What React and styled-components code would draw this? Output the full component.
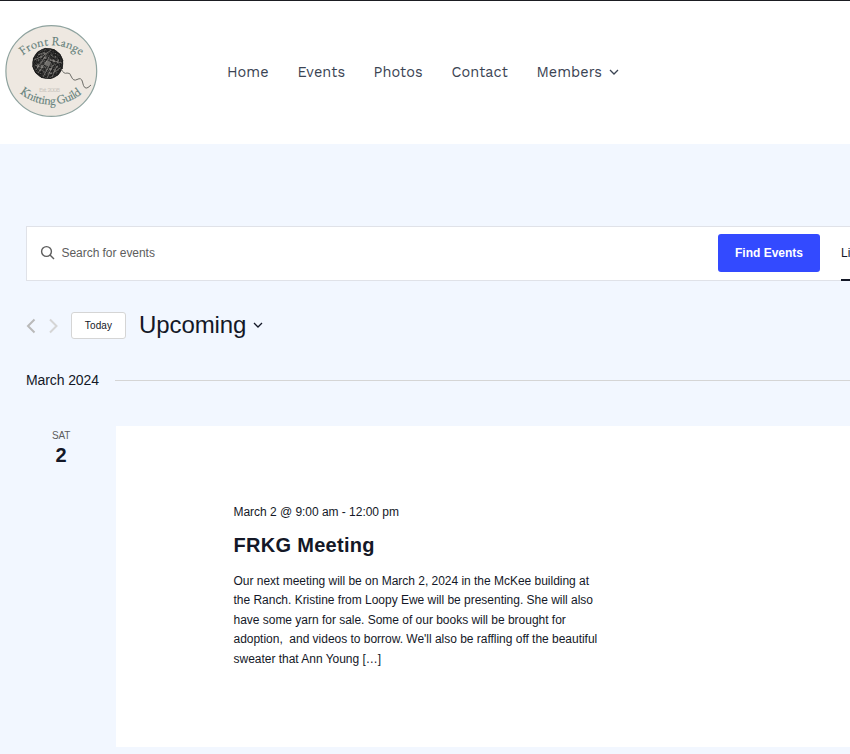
import React from "react";
import styled, { createGlobalStyle } from "styled-components";

const GlobalStyle = createGlobalStyle`
  * { box-sizing: border-box; }
  body {
    margin: 0;
    background: #f2f7ff;
    color: #141827;
    font-family: "Liberation Sans", Arial, sans-serif;
    overflow: hidden;
  }
`;

const Page = styled.div`
  width: 850px;
  height: 754px;
  overflow: hidden;
`;

const Header = styled.header`
  display: flex;
  align-items: center;
  height: 144px;
  padding: 0 0 4px 5px;
  background: #fff;
  border-top: 1px solid #1b1d22;
`;

const Logo = styled.svg`
  display: block;
  flex: none;
`;

const Nav = styled.nav`
  display: flex;
  padding: 4px 0 0 129px;
  gap: 29px;
`;

const NavItem = styled.a`
  display: flex;
  align-items: center;
  flex: none;
  width: ${(p) => p.$width}px;
  color: #3b4453;
  font: 400 14.5px/20px "Work Sans", Inter, sans-serif;
  letter-spacing: ${(p) => p.$spacing}px;
  white-space: nowrap;
`;

const Chevron = styled.svg`
  display: block;
  flex: none;
  fill: none;
  stroke: ${(p) => p.$color || "#141827"};
  stroke-width: ${(p) => p.$weight || 1.3};
  margin-left: ${(p) => p.$gap || 0}px;
`;

const Calendar = styled.main`
  padding: 82px 0 0 26px;
`;

const SearchBar = styled.div`
  display: flex;
  align-items: center;
  width: 900px;
  height: 55px;
  padding-bottom: 2px;
  background: #fff;
  border: 1px solid #e0e2e8;
`;

const SearchField = styled.label`
  display: flex;
  align-items: center;
  width: 691px;
  padding-left: 13px;
  gap: 5.5px;
  color: #5d5d5d;
  font-size: 12px;
  letter-spacing: -0.04px;
`;

const FindButton = styled.button`
  width: 102px;
  height: 38px;
  padding: 0;
  border: 0;
  border-radius: 3px;
  background: #334aff;
  color: #fff;
  font: bold 12px "Liberation Sans", Arial, sans-serif;
`;

const ViewTab = styled.div`
  align-self: flex-start;
  width: 40px;
  height: 54px;
  margin-left: 21px;
  border-bottom: 2px solid #141827;
  font-size: 12px;
  line-height: 52px;
`;

const TopBar = styled.div`
  display: flex;
  align-items: center;
  height: 27px;
  margin-top: 31px;
`;

const Arrows = styled.div`
  display: flex;
  gap: 13px;
  width: 45px;
  padding-top: 1px;
`;

const TodayButton = styled.button`
  width: 55px;
  height: 27px;
  padding: 0 0 1px;
  border: 1px solid #d5d5d5;
  border-radius: 3px;
  background: #fff;
  color: #141827;
  font: 10px "Liberation Sans", Arial, sans-serif;
  letter-spacing: 0.15px;
`;

const RangeTitle = styled.h2`
  display: flex;
  align-items: center;
  margin: 0 0 2px 13px;
  font-size: 24px;
  font-weight: 400;
  line-height: 27px;
  letter-spacing: -0.1px;
`;

const MonthRow = styled.div`
  display: flex;
  align-items: center;
  height: 20px;
  margin-top: 31px;
  font-size: 14px;
`;

const MonthName = styled.h3`
  width: 89px;
  margin: 0;
  font-size: 14px;
  font-weight: 400;
  letter-spacing: -0.1px;
`;

const Rule = styled.div`
  flex: 1;
  height: 1px;
  background: #d5d5d5;
`;

const EventRow = styled.article`
  display: flex;
  margin-top: 36px;
`;

const DateTag = styled.time`
  width: 70px;
  margin-right: 20px;
  padding-top: 4px;
  text-align: center;
`;

const Weekday = styled.div`
  color: #5d5d5d;
  font-size: 10px;
  line-height: 12px;
  letter-spacing: -0.2px;
`;

const DayNumber = styled.div`
  font-size: 20px;
  font-weight: 700;
  line-height: 26px;
`;

const EventCard = styled.div`
  flex: 1;
  height: 321px;
  padding: 76px 0 0 117.5px;
  background: #fff;
`;

const EventTime = styled.div`
  font-size: 12px;
  line-height: 20px;
  letter-spacing: -0.03px;
`;

const EventTitle = styled.h3`
  margin: 9px 0 12.9px;
  font-size: 20px;
  line-height: 28px;
  letter-spacing: 0.3px;
`;

const Description = styled.p`
  margin: 0;
  font-size: 12px;
  line-height: 19.4px;
  letter-spacing: -0.02px;
  white-space: pre;
`;

const LINKS = [
  { label: "Home", width: 41.5, spacing: 0.05 },
  { label: "Events", width: 47, spacing: 0.05 },
  { label: "Photos", width: 49, spacing: 0.05 },
  { label: "Contact", width: 56, spacing: 0.05 },
  { label: "Members", width: 90, spacing: 0.05, menu: true },
];

const SUMMARY = [
  "Our next meeting will be on March 2, 2024 in the McKee building at",
  "the Ranch. Kristine from Loopy Ewe will be presenting. She will also",
  "have some yarn for sale. Some of our books will be brought for",
  "adoption,\u00a0 and videos to borrow. We'll also be raffling off the beautiful",
  "sweater that Ann Young […]",
];

// Strands wound around the ball: nested ellipses at several angles.
const STRANDS = [-65, -38, -12, 20, 48, 80].flatMap((angle, i) =>
  [3, 7, 11].map((ry) => ({ angle, ry: ry + (i % 3) * 0.7 }))
);

function GuildLogo() {
  return (
    <Logo width="93" height="94" viewBox="5 24 93 94" role="img" aria-label="Front Range Knitting Guild">
      <defs>
        <path id="topArc" d="M22 56 A46 46 0 0 1 81 56" />
        <path id="bottomArc" d="M18 91.5 A49 49 0 0 0 84.5 91.5" />
      </defs>
      <circle cx="51.3" cy="71" r="45.4" fill="#eee8e1" stroke="#8fa39f" strokeWidth="1.2" />
      <g fill="#64807a" stroke="#64807a" strokeWidth=".15" fontFamily="'EB Garamond', 'Liberation Serif', serif" fontSize="12.5">
        <text textAnchor="middle">
          <textPath href="#topArc" startOffset="50%" textLength="62">Front Range</textPath>
        </text>
        <text textAnchor="middle">
          <textPath href="#bottomArc" startOffset="49%" textLength="67">Knitting Guild</textPath>
        </text>
      </g>
      <circle cx="47.8" cy="63.5" r="15.4" fill="#716f6c" />
      <g fill="none" stroke="#161616" strokeWidth=".6">
        {STRANDS.map((s, i) => (
          <ellipse key={i} cx="47.8" cy="63.5" rx="15.2" ry={s.ry} transform={`rotate(${s.angle} 47.8 63.5)`} />
        ))}
      </g>
      <g fill="none" stroke="#b5b0aa" strokeWidth=".5">
        <path d="M34 60Q43 57 51 50M36 70L46 55M38 73L49 58M43 77L49 66M47 78L53 65M52 77L57 66M50 60L62 63M35 65L43 68M55 72L60 68M38 55L45 52" />
      </g>
      <path
        d="M61 69 Q64 74.5 67 73 Q70 72 71.5 77 Q73.5 81.5 77 79.5 Q81.5 77 82.5 82 Q84 90 88 87.5 L91 85"
        fill="none"
        stroke="#6c6c67"
        strokeWidth="1"
      />
      <text x="39" y="91.5" fill="#cbc6c0" fontFamily="Lato, sans-serif" fontSize="6.5" textLength="21">
        Est. 2008
      </text>
    </Logo>
  );
}

export default function App() {
  return (
    <Page>
      <GlobalStyle />
      <Header>
        <GuildLogo />
        <Nav>
          {LINKS.map((link) => (
            <NavItem key={link.label} $width={link.width} $spacing={link.spacing}>
              {link.label}
              {link.menu && (
                <Chevron width="10" height="8" viewBox="0 0 10 8" $gap={7} $color="#3b4453">
                  <path d="M1 1L5 5L9 1" />
                </Chevron>
              )}
            </NavItem>
          ))}
        </Nav>
      </Header>
      <Calendar>
        <SearchBar>
          <SearchField>
            <svg width="16" height="16" viewBox="0 0 16 16" fill="none" stroke="#5d5d5d" strokeWidth="1.4">
              <circle cx="6.5" cy="6.5" r="4.9" />
              <path d="M10 10L14 14" />
            </svg>
            Search for events
          </SearchField>
          <FindButton>Find Events</FindButton>
          <ViewTab>List</ViewTab>
        </SearchBar>
        <TopBar>
          <Arrows>
            <Chevron width="10" height="16" viewBox="0 0 10 16" $color="#bababa" $weight={2}>
              <path d="M8.5 1.5L2 8L8.5 14.5" />
            </Chevron>
            <Chevron width="10" height="16" viewBox="0 0 10 16" $color="#d5d5d5" $weight={2}>
              <path d="M1 1.5L7.5 8L1 14.5" />
            </Chevron>
          </Arrows>
          <TodayButton>Today</TodayButton>
          <RangeTitle>
            Upcoming
            <Chevron width="10" height="8" viewBox="0 0 10 8" $gap={7}>
              <path d="M1 2L5 6L9 2" />
            </Chevron>
          </RangeTitle>
        </TopBar>
        <MonthRow>
          <MonthName>March 2024</MonthName>
          <Rule />
        </MonthRow>
        <EventRow>
          <DateTag>
            <Weekday>SAT</Weekday>
            <DayNumber>2</DayNumber>
          </DateTag>
          <EventCard>
            <EventTime>March 2 @ 9:00 am - 12:00 pm</EventTime>
            <EventTitle>FRKG Meeting</EventTitle>
            <Description>{SUMMARY.join("\n")}</Description>
          </EventCard>
        </EventRow>
      </Calendar>
    </Page>
  );
}
